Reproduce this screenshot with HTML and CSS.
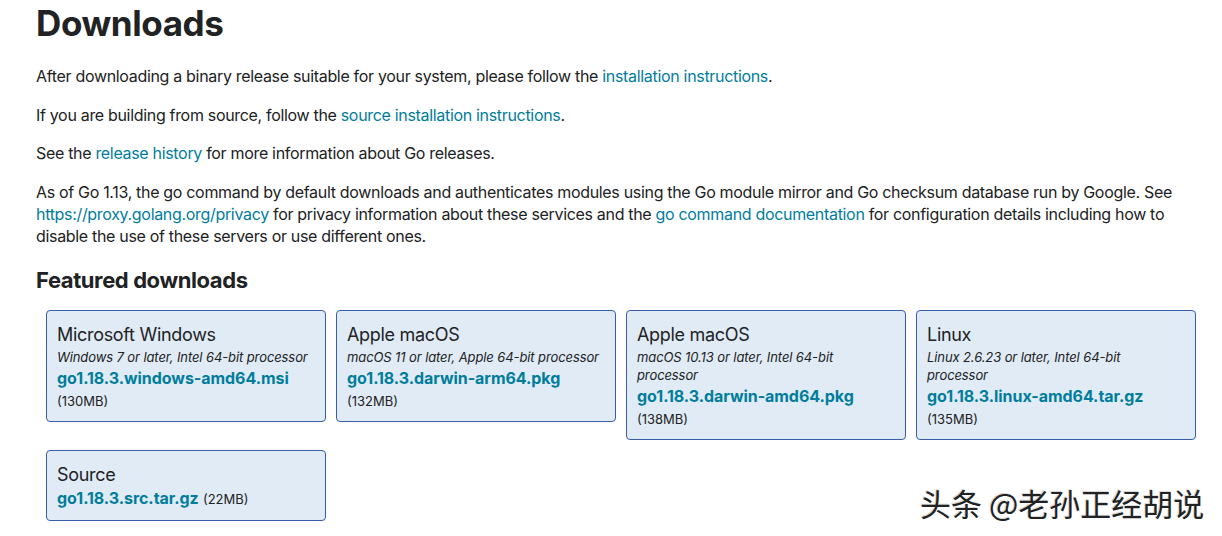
FILE: index.html
```html
<!DOCTYPE html>
<html lang="en">
<head>
<meta charset="utf-8">
<title>Downloads</title>
<link rel="stylesheet" href="styles.css">
</head>
<body>
<main class="page">
  <h1 class="title">Downloads</h1>
  <p class="text">After downloading a binary release suitable for your system, please follow the <a href="#" class="link">installation instructions</a>.</p>
  <p class="text">If you are building from source, follow the <a href="#" class="link">source installation instructions</a>.</p>
  <p class="text">See the <a href="#" class="link">release history</a> for more information about Go releases.</p>
  <p class="text">As of Go 1.13, the go command by default downloads and authenticates modules using the Go module mirror and Go checksum database run by Google. See <a href="#" class="link">https://proxy.golang.org/privacy</a> for privacy information about these services and the <a href="#" class="link">go command documentation</a> for configuration details including how to disable the use of these servers or use different ones.</p>

  <h2 class="subtitle">Featured downloads</h2>
  <div class="boxes">
    <a href="#" class="box">
      <div class="box-os">Microsoft Windows</div>
      <div class="box-desc">Windows 7 or later, Intel 64-bit processor</div>
      <div class="box-file">go1.18.3.windows-amd64.msi</div>
      <div class="box-size">(130MB)</div>
    </a>
    <a href="#" class="box">
      <div class="box-os">Apple macOS</div>
      <div class="box-desc">macOS 11 or later, Apple 64-bit processor</div>
      <div class="box-file">go1.18.3.darwin-arm64.pkg</div>
      <div class="box-size">(132MB)</div>
    </a>
    <a href="#" class="box">
      <div class="box-os">Apple macOS</div>
      <div class="box-desc">macOS 10.13 or later, Intel 64-bit processor</div>
      <div class="box-file">go1.18.3.darwin-amd64.pkg</div>
      <div class="box-size">(138MB)</div>
    </a>
    <a href="#" class="box">
      <div class="box-os">Linux</div>
      <div class="box-desc">Linux 2.6.23 or later, Intel 64-bit processor</div>
      <div class="box-file">go1.18.3.linux-amd64.tar.gz</div>
      <div class="box-size">(135MB)</div>
    </a>
    <a href="#" class="box">
      <div class="box-os">Source</div>
      <div class="box-line"><span class="box-file inline">go1.18.3.src.tar.gz</span> <span class="box-size inline">(22MB)</span></div>
    </a>
  </div>
</main>
<div class="watermark">头条 @老孙正经胡说</div>
</body>
</html>
```

FILE: styles.css
```css
html, body {
  margin: 0;
  padding: 0;
  background: #ffffff;
}

body {
  font-family: Inter, "Noto Sans", "Liberation Sans", sans-serif;
  color: #202224;
  font-size: 16px;
  line-height: 22px;
  letter-spacing: -0.32px;
}

.page {
  width: 1160px;
  padding-left: 36px;
}

.title {
  font-size: 35px;
  line-height: 44px;
  font-weight: 700;
  margin: 1px 0 20px;
  letter-spacing: -0.4px;
}

.text {
  margin: 0 0 16.6px;
}

.link {
  color: #007d9c;
  text-decoration: none;
}

.subtitle {
  font-size: 22px;
  line-height: 28px;
  font-weight: 700;
  margin: 19px 0 16px;
  letter-spacing: -0.4px;
}

.boxes {
  display: flex;
  flex-wrap: wrap;
  align-items: flex-start;
  gap: 10px 10px;
  margin-left: 10px;
}

.box {
  box-sizing: border-box;
  width: 280px;
  display: flex;
  flex-direction: column;
  padding: 12px 12px 11px 10px;
  background: #e0ebf5;
  border: 1px solid #375eab;
  border-radius: 4px;
  text-decoration: none;
  color: #202224;
}

.box-os {
  font-size: 18px;
  line-height: 24px;
  letter-spacing: -0.3px;
}

.box-desc {
  margin-top: 1px;
  font-size: 13px;
  line-height: 18px;
  font-style: italic;
  letter-spacing: -0.1px;
}

.box-file {
  margin-top: 1px;
  font-size: 16px;
  line-height: 22px;
  font-weight: 700;
  color: #007d9c;
  letter-spacing: -0.05px;
}

.box-size {
  margin-top: 3px;
  font-size: 13px;
  line-height: 18px;
  letter-spacing: 0;
}

.box-line {
  margin-top: 0;
  line-height: 22px;
}

.inline {
  margin-top: 0;
}

.watermark {
  position: absolute;
  left: 920px;
  top: 482px;
  font-family: "Noto Sans CJK SC", sans-serif;
  font-size: 31px;
  line-height: 42px;
  letter-spacing: 0;
  color: #202224;
  text-shadow: 1px 1px 0 #ffffff, -1px -1px 0 #d8d8d8;
}
```
